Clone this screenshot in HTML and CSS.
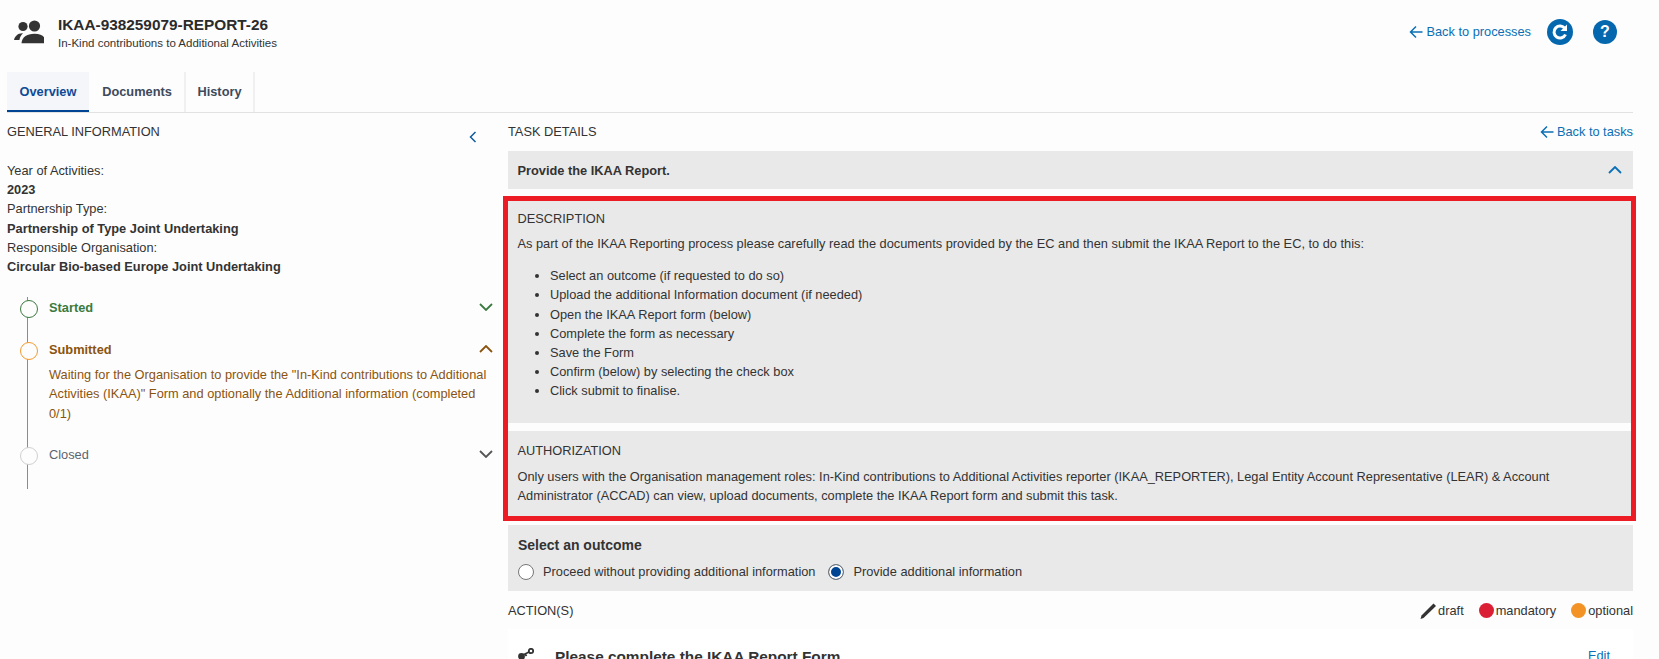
FILE: index.html
```html
<!DOCTYPE html>
<html lang="en">
<head>
<meta charset="utf-8">
<title>IKAA-938259079-REPORT-26</title>
<link rel="stylesheet" href="styles.css">
</head>
<body>
<div class="page">
  <header class="top">
    <svg class="people" viewBox="0 0 30 24" width="30" height="24"><circle cx="9" cy="6.500" r="4.600"/><circle cx="20.500" cy="6" r="5.600"/><path d="M0 20c1-4 4-7 9-6.700-1.600 1.600-3 3.600-3.600 6.700z"/><path d="M7.500 23.200c.5-6 5-9.500 13-9.500s12 3.500 9.500 9.500z"/></svg>
    <div class="top-titles">
      <div class="top-title">IKAA-938259079-REPORT-26</div>
      <div class="top-sub">In-Kind contributions to Additional Activities</div>
    </div>
    <div class="top-actions">
      <a class="back"><svg class="arrow" viewBox="0 0 14 14" width="14" height="14"><path d="M13.500 7H1.500M7 1.500 1.500 7 7 12.500"/></svg>Back to processes</a>
      <svg class="round refresh" viewBox="0 0 26 26" width="26" height="26"><circle cx="13" cy="13" r="13"/><path class="ring" d="M18.500 15.500a6 6 0 1 1-.6-6"/><path class="tip" d="M20 5.500v6.500h-6.500z"/></svg>
      <span class="help">?</span>
    </div>
  </header>
  <nav class="tabs">
    <a class="tab active">Overview</a>
    <a class="tab">Documents</a>
    <a class="tab">History</a>
  </nav>
  <div class="columns">
    <aside class="left">
      <div class="left-head">
        <span>GENERAL INFORMATION</span>
        <svg class="collapse" viewBox="0 0 8 12" width="8" height="12"><path d="M6.500 1 1.500 6l5 5"/></svg>
      </div>
      <dl class="facts">
        <dt>Year of Activities:</dt><dd>2023</dd>
        <dt>Partnership Type:</dt><dd>Partnership of Type Joint Undertaking</dd>
        <dt>Responsible Organisation:</dt><dd>Circular Bio-based Europe Joint Undertaking</dd>
      </dl>
      <ol class="steps">
        <li class="step started">
          <div class="step-head"><b>Started</b><svg class="chev" viewBox="0 0 14 8" width="14" height="8"><path d="M1 1l6 6 6-6"/></svg></div>
        </li>
        <li class="step submitted">
          <div class="step-head"><b>Submitted</b><svg class="chev" viewBox="0 0 14 8" width="14" height="8"><path d="M1 7l6-6 6 6"/></svg></div>
          <p>Waiting for the Organisation to provide the "In-Kind contributions to Additional Activities (IKAA)" Form and optionally the Additional information (completed 0/1)</p>
        </li>
        <li class="step closed">
          <div class="step-head"><span>Closed</span><svg class="chev" viewBox="0 0 14 8" width="14" height="8"><path d="M1 1l6 6 6-6"/></svg></div>
        </li>
      </ol>
    </aside>
    <main class="right">
      <div class="right-head">
        <span>TASK DETAILS</span>
        <a class="back"><svg class="arrow" viewBox="0 0 14 14" width="14" height="14"><path d="M13.500 7H1.500M7 1.500 1.500 7 7 12.500"/></svg>Back to tasks</a>
      </div>
      <div class="task-bar">
        <b>Provide the IKAA Report.</b>
        <svg class="chev-up" viewBox="0 0 14 8" width="14" height="8"><path d="M1 7l6-6 6 6"/></svg>
      </div>
      <div class="mark">
        <section class="panel desc">
          <h3>DESCRIPTION</h3>
          <p>As part of the IKAA Reporting process please carefully read the documents provided by the EC and then submit the IKAA Report to the EC, to do this:</p>
          <ul>
            <li>Select an outcome (if requested to do so)</li>
            <li>Upload the additional Information document (if needed)</li>
            <li>Open the IKAA Report form (below)</li>
            <li>Complete the form as necessary</li>
            <li>Save the Form</li>
            <li>Confirm (below) by selecting the check box</li>
            <li>Click submit to finalise.</li>
          </ul>
        </section>
        <section class="panel auth">
          <h3>AUTHORIZATION</h3>
          <p>Only users with the Organisation management roles: In-Kind contributions to Additional Activities reporter (IKAA_REPORTER), Legal Entity Account Representative (LEAR) &amp; Account Administrator (ACCAD) can view, upload documents, complete the IKAA Report form and submit this task.</p>
        </section>
      </div>
      <section class="outcome">
        <div class="outcome-title">Select an outcome</div>
        <div class="radios">
          <label class="radio"><span class="dot"></span>Proceed without providing additional information</label>
          <label class="radio on"><span class="dot"></span>Provide additional information</label>
        </div>
      </section>
      <div class="actions-head">
        <span>ACTION(S)</span>
        <div class="legend">
          <span class="leg"><svg class="pencil" viewBox="0 0 16 16" width="16" height="16"><path d="M.5 16l1-3.500L13.500 .5 16 3 3.500 15z"/></svg>draft</span>
          <span class="leg"><i class="bullet red"></i>mandatory</span>
          <span class="leg"><i class="bullet orange"></i>optional</span>
        </div>
      </div>
      <div class="card">
        <svg class="key" viewBox="0 0 16 16" width="16" height="16"><circle cx="13" cy="3" r="2.200"/><path d="M11 4 3 8"/><circle class="key-fill" cx="3.500" cy="8.500" r="2.500"/><path d="M7 6l1.500 2"/></svg>
        <b class="card-title">Please complete the IKAA Report Form</b>
        <a class="edit">Edit</a>
      </div>
    </main>
  </div>
</div>
</body>
</html>
```
FILE: styles.css
```css
* { box-sizing: border-box; }
html, body { margin: 0; height: 100%; overflow: hidden; background: #fdfdfd; }
body { font-family: "Liberation Sans", Arial, sans-serif; font-size: 12.800px; line-height: 1.500; color: #333; }
.page { height: 659px; overflow: hidden; padding-right: 26px; }
a { color: #0a6fb5; }

.top { display: flex; align-items: flex-start; height: 72px; padding: 20px 0 0 14px; }
.people { fill: #333; margin-right: 14px; flex: none; }
.top-titles { margin-top: -6px; }
.top-title { font-size: 15.360px; font-weight: 700; line-height: 22px; color: #2b2b2b; }
.top-sub { font-size: 11.520px; line-height: 15px; }
.top-actions { margin-left: auto; display: flex; align-items: center; margin-top: -1.500px; }
.top-actions .back { margin-right: 16px; }
.back { display: inline-flex; align-items: center; gap: 3px; }
.arrow { fill: none; stroke: #0a6fb5; stroke-width: 1.500; }
.refresh { margin-right: 20px; }
.ring { fill: none; stroke: #fff; stroke-width: 3; }
.tip { fill: #fff; }
.round circle { fill: #0568ae; }
.help { width: 24px; height: 24px; border-radius: 50%; background: #0568ae; color: #fff; font-weight: 700; font-size: 16px; line-height: 24px; text-align: center; margin-right: 16px; }

.tabs { display: flex; margin-left: 7px; height: 41px; border-bottom: 1px solid #e2e2e2; }
.tab { height: 40px; padding-bottom: 1px; display: flex; align-items: center; justify-content: center; font-weight: 700; color: #404a5a; border-right: 2px solid #f0f0f0; }
.tab:nth-child(1) { width: 82px; margin-right: 1px; background: #f4f6fa; color: #0f4a96; border-right: 0; box-shadow: inset 0 -2px 0 #004494; }
.tab:nth-child(2) { width: 96px; }
.tab:nth-child(3) { width: 69px; }

.columns { display: flex; margin-left: 7px; }
.left { width: 480px; flex: none; margin-right: 21px; }
.left-head { display: flex; justify-content: space-between; padding-top: 9px; height: 48px; }
.collapse { fill: none; stroke: #0f5a9e; stroke-width: 1.500; margin: 9px 10px 0 0; }
.facts { margin: 0; }
.facts dd { margin: 0; font-weight: 700; }
.steps { list-style: none; margin: 21px 0 0 20px; padding: 0; border-left: 1px solid #8c8c8c; min-height: 192px; }
.step { position: relative; padding: 0 0 0 21px; }
.step::before { content: ""; position: absolute; left: -8.500px; top: 3px; width: 16px; height: 16px; border-radius: 50%; background: #fdfdfd; border: 1px solid #bbb; }
.step-head { display: flex; justify-content: space-between; align-items: center; height: 20px; }
.step p { margin: 6px 0 0; max-width: 445px; }
.chev { fill: none; stroke: #555; stroke-width: 1.800; margin-right: -6px; }
.started { height: 42px; color: #3b7a3f; }
.started::before { border-color: #3b7a3f; }
.started .chev { stroke: #3b7a3f; }
.submitted { height: 105px; color: #8a5410; }
.submitted::before { border-color: #f39a2e; }
.submitted .chev { stroke: #8a5410; }
.closed { color: #5c6470; }
.closed::before { border-color: #d0d0d0; }

.right { flex: 1; min-width: 0; }
.right-head { display: flex; justify-content: space-between; align-items: flex-start; padding-top: 9px; height: 38px; }
.task-bar { display: flex; justify-content: space-between; align-items: center; height: 38px; background: #e9e9e9; padding: 1px 11px 0 9.500px; }
.chev-up { fill: none; stroke: #0a6fb5; stroke-width: 1.800; margin-top: -1px; }
.mark { margin: 7px -3px 4px -5px; border: 5px solid #ed1c24; background: #fdfdfd; }
.panel { background: #e9e9e9; padding: 8px 10px 0 9.500px; }
.panel h3 { margin: 0; font-size: 12.800px; font-weight: 400; line-height: 19px; }
.panel p { margin: 6px 0 0; }
.desc { height: 222px; margin-bottom: 8px; }
.auth { height: 85px; padding-top: 10px; }
.auth p { margin-top: 6.500px; }
.desc ul { margin: 13px 0 0; padding-left: 32.500px; }
.outcome { background: #e9e9e9; height: 66px; padding: 11px 10px 0; }
.outcome-title { font-weight: 700; font-size: 14px; line-height: 19px; }
.radios { display: flex; margin-top: 7px; }
.radio { display: flex; align-items: center; margin-right: 13px; }
.dot { width: 16px; height: 16px; border-radius: 50%; border: 1px solid #777; background: #fff; margin-right: 9px; }
.on .dot { background: #004494; box-shadow: inset 0 0 0 2px #fff; }
.actions-head { display: flex; justify-content: space-between; align-items: center; height: 38px; padding-top: 1px; }
.legend { display: flex; gap: 15px; }
.leg { display: inline-flex; align-items: center; gap: 2px; }
.pencil { fill: #333; }
.bullet { width: 15px; height: 15px; border-radius: 50%; }
.red { background: #db1f35; }
.orange { background: #f39325; }
.card { display: flex; background: #fff; height: 60px; padding: 16px 10px 0; align-items: flex-start; }
.key { fill: none; stroke: #333; stroke-width: 1.800; margin: 3px 21px 0 0; }
.key-fill { fill: #333; }
.card-title { font-size: 15.360px; line-height: 24px; }
.edit { margin: 1px 13px 0 auto; }
```
